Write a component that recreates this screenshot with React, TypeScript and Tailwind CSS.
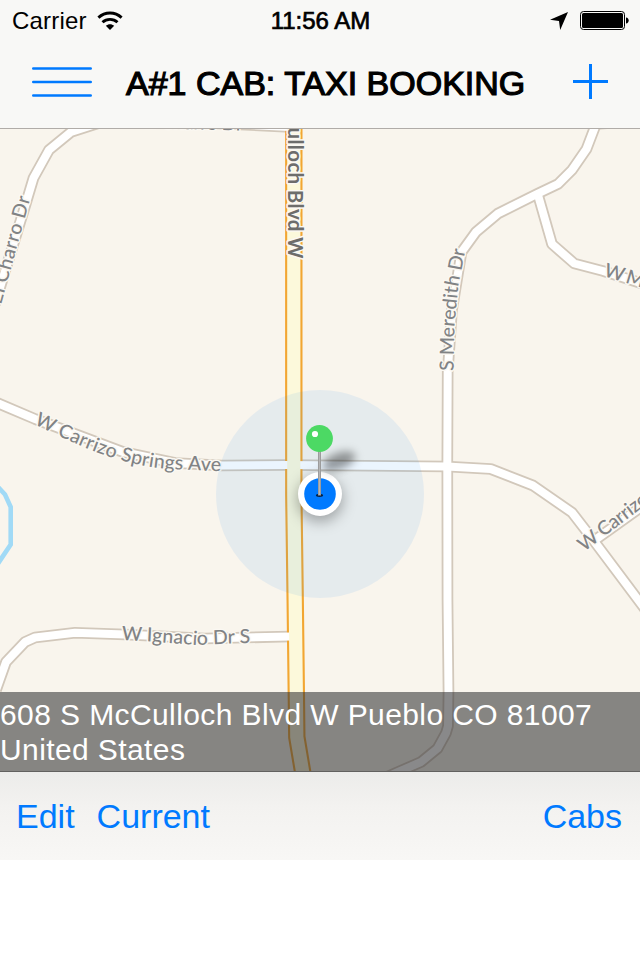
import type { ReactNode } from 'react';

const WifiIcon = () => (
  <svg width="26" height="20" viewBox="0 0 26 20" fill="none" stroke="#000" strokeWidth="2.9">
    <path d="M1.4 6.6C8 0.4 18 0.4 24.6 6.6" />
    <path d="M5.5 11.3C9.7 7.4 16.3 7.4 20.5 11.3" />
    <path d="M13 19L8.8 14.8C11.2 12.7 14.8 12.7 17.2 14.8Z" fill="#000" stroke="none" />
  </svg>
);

const LocationArrow = () => (
  <svg width="18" height="18" viewBox="0 0 18 18">
    <path d="M0 7.8L18 0L10.2 18L9 9Z" fill="#000" />
  </svg>
);

const BatteryIcon = () => (
  <svg width="49" height="20" viewBox="0 0 49 20">
    <rect x="0.5" y="0.5" width="44" height="18" rx="3" fill="none" stroke="#000" />
    <rect x="2" y="2" width="41" height="15" rx="1.5" fill="#000" />
    <path d="M46 6.5C49.6 6.5 49.6 12.5 46 12.5Z" fill="#000" />
  </svg>
);

const MenuIcon = () => (
  <svg width="60" height="32" viewBox="0 0 60 32" stroke="#007aff" strokeWidth="2.6" strokeLinecap="round">
    <path d="M1.3 2.5H58.7M1.3 16H58.7M1.3 29.5H58.7" />
  </svg>
);

const PlusIcon = () => (
  <svg width="35" height="35" viewBox="0 0 35 35" stroke="#007aff" strokeWidth="3">
    <path d="M17.5 0V35M0 17.5H35" />
  </svg>
);

// Minor roads, casing is drawn first so that crossings stay open
const roads = [
  'M-5 304L26 203L33.5 178L49 150L71 132L105 121L150 120L240 124.5L290 127',
  'M603 105L594.5 128L586.5 149L572 170L558 184L537 194L498 213.5L476 232L461.5 252L452 310L447.7 372L447.3 466L447.5 600L448.5 692L448 726L446 733L437.5 748.5L421 762L398 772L380 780',
  'M538 195L552 244L574.3 263.5L603 271L650 286',
  'M595 124L640 121',
  'M-5 402L35 419L123 452L175 463L222 465.5L286 465L447 466.5L490.7 469L533 485.5L572 512.5L594 541L645 609',
  'M595 540L655 497',
  'M-4 690L6 662L25 642L35 637.5L75 632.8L125 634.5L205 638.5L290 636.5',
];

const mainRoad = 'M293.8 120V495L295.2 600L296.3 692L296.8 737L304 780';

interface RoadLabel {
  id: string;
  path: string;
  text: string;
  length: number;
  size?: number;
  major?: boolean;
}

const labels: RoadLabel[] = [
  { id: 'charro-top', path: 'M117 127L180 129L260 131', text: 'W El Charro Dr', length: 126 },
  { id: 'charro', path: 'M1 305L31.5 194', text: 'El Charro Dr', length: 111 },
  { id: 'meredith', path: 'M453.5 371L454.5 325L458.5 285L466 246', text: 'S Meredith Dr', length: 122 },
  { id: 'm', path: 'M603 276L660 293', text: 'W Mer', length: 56 },
  { id: 'springs', path: 'M34 424C75 444 120 466 170 469L235 472', text: 'W Carrizo Springs Ave', length: 195 },
  { id: 'carrizo', path: 'M584 552L664 491', text: 'W Carrizo S', length: 98 },
  { id: 'ignacio', path: 'M121.5 640L150 641.5L195 645L228 643.5L270 642.5', text: 'W Ignacio Dr S', length: 129 },
  { id: 'mcculloch', path: 'M288 127.5V270', text: 'ulloch Blvd W', length: 131, size: 20.5, major: true },
];

const Map = () => (
  <svg className="block" width="640" height="642" viewBox="0 129 640 642">
    <defs>
      <filter id="soft" x="-50%" y="-50%" width="200%" height="200%">
        <feGaussianBlur stdDeviation="4.5" />
      </filter>
      <filter id="glow" x="-50%" y="-50%" width="200%" height="200%">
        <feGaussianBlur stdDeviation="7" />
      </filter>
      {labels.map((l) => (
        <path key={l.id} id={l.id} d={l.path} />
      ))}
    </defs>
    <rect x="0" y="129" width="640" height="642" fill="#f9f5ed" />
    <path d="M-3 486L5 494.5L10.7 507V544.5L-3 565" fill="none" stroke="#a1daf6" strokeWidth="4.6" />

    <g fill="none" strokeLinejoin="round">
      {roads.map((d) => (
        <path key={d} d={d} stroke="#d2c8bb" strokeWidth="11.6" />
      ))}
      <path d={mainRoad} stroke="#f2a632" strokeWidth="17.4" />
      {roads.map((d) => (
        <path key={d} d={d} stroke="#fff" strokeWidth="8" />
      ))}
      <path d={mainRoad} stroke="#fcf9db" strokeWidth="13.2" />
    </g>

    <g
      fontFamily="Lato, sans-serif"
      stroke="#fbf8f2"
      strokeWidth="3"
      strokeLinejoin="round"
      paintOrder="stroke"
    >
      {labels.map((l) => (
        <text
          key={l.id}
          fontSize={l.size ?? 19.5}
          fontWeight={l.major ? 700 : 500}
          fill={l.major ? '#6d6d6b' : '#818385'}
        >
          <textPath href={`#${l.id}`} textLength={l.length}>
            {l.text}
          </textPath>
        </text>
      ))}
    </g>

    {/* Current location */}
    <circle cx="320" cy="494" r="104" fill="#0080f4" fillOpacity="0.08" />
    <circle cx="320" cy="499" r="23" fill="#000" fillOpacity="0.3" filter="url(#glow)" />
    <circle cx="320" cy="494" r="22" fill="#fff" />
    <circle cx="320" cy="494" r="15.8" fill="#007aff" />

    {/* Pin */}
    <ellipse
      cx="339"
      cy="461"
      rx="17"
      ry="8"
      transform="rotate(-20 339 461)"
      fill="#000"
      fillOpacity="0.38"
      filter="url(#soft)"
    />
    <ellipse cx="319.5" cy="495.3" rx="3.6" ry="1.6" fill="#062244" />
    <path d="M319.5 450V495.5" stroke="#999" strokeWidth="3" />
    <path d="M319.5 450V495" stroke="#b5b5b5" strokeWidth="1.2" />
    <circle cx="319.5" cy="438.5" r="13.4" fill="#4cd964" />
    <circle cx="315" cy="434" r="3.1" fill="#fff" />
  </svg>
);

const BarButton = ({ children }: { children: ReactNode }) => (
  <button className="text-[34px] leading-none text-[#007aff]">{children}</button>
);

export default function App() {
  return (
    <div className="flex h-[960px] w-[640px] flex-col overflow-hidden bg-white font-['Liberation_Sans',Arial,sans-serif] text-black">
      <header className="h-[129px] border-b border-[#b0aca8] bg-[#f8f8f6]">
        <div className="grid h-[41px] grid-cols-3 items-center pr-[11px] pl-3 text-2xl leading-none">
          <div className="flex items-center gap-2.5">
            <span className="tracking-[0.2px]">Carrier</span>
            <WifiIcon />
          </div>
          <span className="text-center whitespace-nowrap [-webkit-text-stroke:0.7px_black]">11:56 AM</span>
          <div className="flex items-center justify-end gap-3">
            <LocationArrow />
            <BatteryIcon />
          </div>
        </div>
        <div className="flex h-[87px] items-center pr-8 pl-8">
          <button aria-label="Menu" className="pb-[5px]">
            <MenuIcon />
          </button>
          <h1 className="ml-[34px] pb-[3px] text-[34px] leading-none whitespace-nowrap [-webkit-text-stroke:1.2px_black]">
            A#1 CAB: TAXI BOOKING
          </h1>
          <button aria-label="Add" className="ml-auto pb-1.5">
            <PlusIcon />
          </button>
        </div>
      </header>

      <main className="relative h-[642px]">
        <Map />
        <p className="absolute inset-x-0 bottom-0 h-[79px] bg-[#2f3031]/57 pt-[5px] text-[30px] leading-[35px] tracking-[0.4px] text-white">
          608 S McCulloch Blvd W Pueblo CO 81007 United States
        </p>
      </main>

      <footer className="flex h-[89px] items-center justify-between border-t border-[#62615f] bg-linear-to-b from-[#ececea] via-[#f3f2f0] via-40% to-[#f8f7f5] pr-[18px] pl-4">
        <div className="flex gap-[22px]">
          <BarButton>Edit</BarButton>
          <BarButton>Current</BarButton>
        </div>
        <BarButton>Cabs</BarButton>
      </footer>
    </div>
  );
}
